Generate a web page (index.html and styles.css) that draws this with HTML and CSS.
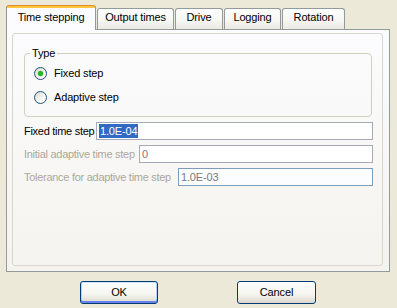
FILE: index.html
```html
<!DOCTYPE html>
<html>
<head>
<meta charset="utf-8">
<link rel="stylesheet" href="styles.css">
</head>
<body>
<div class="dialog">
  <div class="tabs">
    <div class="tab active t1">Time stepping</div>
    <div class="tab t2">Output times</div>
    <div class="tab t3">Drive</div>
    <div class="tab t4">Logging</div>
    <div class="tab t5">Rotation</div>
  </div>
  <div class="panel">
    <div class="page">
      <fieldset class="group">
        <legend>Type</legend>
        <div class="radio"><span class="dot checked"></span>Fixed step</div>
        <div class="radio"><span class="dot"></span>Adaptive step</div>
      </fieldset>
      <div class="field">
        <span class="lbl">Fixed time step</span>
        <div class="input w1"><span class="sel">1.0E-04</span></div>
      </div>
      <div class="field disabled">
        <span class="lbl">Initial adaptive time step</span>
        <div class="input w2">0</div>
      </div>
      <div class="field disabled">
        <span class="lbl">Tolerance for adaptive time step</span>
        <div class="input w3 blue">1.0E-03</div>
      </div>
    </div>
  </div>
  <div class="buttons">
    <div class="btn default ok">OK</div>
    <div class="btn cancel">Cancel</div>
  </div>
</div>
</body>
</html>
```

FILE: styles.css
```css
html, body {
  margin: 0;
  padding: 0;
}
body {
  font-family: "Liberation Sans", Arial, sans-serif;
  font-size: 11px;
  letter-spacing: -0.15px;
  color: #000;
}
.dialog {
  width: 397px;
  height: 308px;
  box-sizing: border-box;
  padding-top: 5px;
  background-color: #ece9d8;
}
.tabs {
  display: flex;
  align-items: flex-end;
  gap: 1px;
  height: 24px;
  padding-left: 6px;
  position: relative;
  z-index: 1;
}
.tab {
  box-sizing: border-box;
  height: 21px;
  padding-top: 2px;
  line-height: 13px;
  text-align: center;
  border: 1px solid #919b9c;
  border-bottom: none;
  border-radius: 3px 3px 0 0;
  background: linear-gradient(#ffffff, #f7f7f4 50%, #ebeae3);
}
.tab.active {
  height: 25px;
  margin-bottom: -1px;
  padding-top: 5px;
  border-top-color: #e68b2c;
  background: linear-gradient(#ffc73c 0 2px, #fcfcfe 2px);
}
.t1 { width: 90px; }
.t2 { width: 77px; }
.t3 { width: 48px; }
.t4 { width: 57px; }
.t5 { width: 63px; }

.panel {
  box-sizing: border-box;
  width: 384px;
  height: 243px;
  margin-left: 6px;
  padding: 3px 6px 5px 5px;
  border: 1px solid #919b9c;
  background: linear-gradient(#fcfcfe, #f4f3ee);
}
.page {
  box-sizing: border-box;
  height: 100%;
  padding: 13px 10px 0 11px;
  border: 1px solid #d9d7cb;
  border-radius: 3px;
}
.group {
  margin: 0;
  padding: 1px 0 7px 9px;
  border: 1px solid #d0d0bf;
  border-radius: 4px;
  min-width: 0;
}
.group legend {
  padding: 0 2px;
  margin-left: -4px;
  line-height: 13px;
}
.radio {
  display: flex;
  align-items: center;
  gap: 7px;
  height: 24px;
}
.dot {
  box-sizing: border-box;
  width: 13px;
  height: 13px;
  border-radius: 50%;
  border: 1px solid #1c5180;
  background: linear-gradient(135deg, #dcd9ce, #ffffff 80%);
}
.dot.checked {
  background:
    radial-gradient(circle, #2fb32c 0 2.2px, #6fd16b 2.6px, transparent 3.2px),
    linear-gradient(135deg, #dcd9ce, #ffffff 80%);
}
.field {
  display: flex;
  align-items: center;
  height: 18px;
  margin-top: 5px;
  margin-right: -1px;
}
.lbl {
  flex: 1;
  white-space: nowrap;
  letter-spacing: -0.28px;
}
.disabled .lbl {
  color: #aca899;
}
.input {
  box-sizing: border-box;
  height: 18px;
  padding-left: 2px;
  line-height: 16px;
  border: 1px solid #a5a9b8;
  background: #ffffff;
  color: #7a7a7a;
}
.input.blue {
  border-color: #7f9db9;
  background: #fbfdff;
}
.w1 { width: 277px; }
.w2 { width: 234px; }
.w3 { width: 195px; }
.sel {
  background: #316ac5;
  color: #ffffff;
  padding: 1px 1px;
}
.buttons {
  display: flex;
  gap: 79px;
  padding-left: 80px;
  margin-top: 9px;
}
.btn {
  box-sizing: border-box;
  height: 23px;
  line-height: 21px;
  text-align: center;
  border: 1px solid #003c74;
  border-radius: 3px;
  background: linear-gradient(#ffffff, #f4f4ef 60%, #dcd8cc);
}
.btn.default {
  box-shadow: inset 0 1px #cee7ff, inset 0 -2px #6982ee, inset 1px 0 #b8cff7, inset -1px 0 #b8cff7;
}
.ok { width: 78px; }
.cancel { width: 79px; }
```
